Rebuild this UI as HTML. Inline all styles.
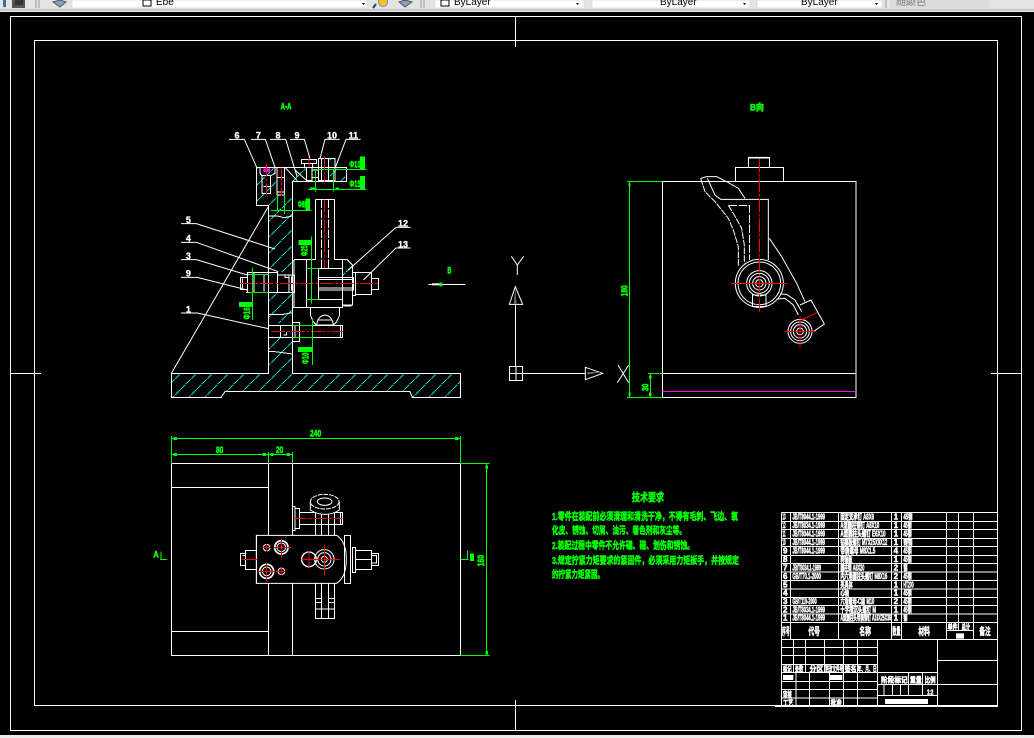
<!DOCTYPE html>
<html lang="zh"><head><meta charset="utf-8"><title>CAD</title>
<style>
html,body{margin:0;padding:0;background:#ececec;width:1034px;height:738px;overflow:hidden}
svg{position:absolute;left:0;top:0;display:block;font-family:"Liberation Sans","Noto Sans CJK SC",sans-serif}
.w{fill:none;stroke:#fff;stroke-width:3;shape-rendering:crispEdges}
.n{fill:none;stroke:#fff;stroke-width:3}
.d{fill:none;stroke:#fff;stroke-width:3;stroke-dasharray:26 4;shape-rendering:crispEdges}
.r{fill:none;stroke:#f00;stroke-width:3;stroke-dasharray:40 6 8 6;shape-rendering:crispEdges}
.rs{fill:none;stroke:#f00;stroke-width:3;shape-rendering:crispEdges}
.g{fill:none;stroke:#0f0;stroke-width:3;shape-rendering:crispEdges}
.gf{fill:#0f0;stroke:none;shape-rendering:crispEdges}
.tg{fill:#0f0;stroke:#0f0;stroke-width:1.6;font-weight:bold;font-size:27px}
.tw{fill:#fff;stroke:#fff;stroke-width:.9;font-weight:bold;font-size:27px}
.tb{fill:#fff;stroke:#fff;stroke-width:1.6;font-weight:bold;font-size:24px}
.h{fill:url(#hatch);stroke:none}
</style></head>
<body>
<svg width="1034" height="738" viewBox="0 0 1034 738" xmlns="http://www.w3.org/2000/svg">
<defs>
<pattern id="hatch" patternUnits="userSpaceOnUse" width="48" height="48">
<path d="M-3 51L51 -3M-24 24L24 -24M24 72L72 24" stroke="#0ff" stroke-width="2.6" fill="none" stroke-dasharray="20 3"/>
</pattern>
</defs>
<rect width="1034" height="738" fill="#ececec"/>
<!-- toolbar -->
<rect x="0" y="0" width="1034" height="9" fill="#e4e4e4"/>
<rect x="0" y="9" width="1034" height="2" fill="#c8c8c8"/>
<rect x="12" y="0" width="13" height="8" fill="#555"/><rect x="15" y="0" width="8" height="5" fill="#333"/>
<rect x="3" y="0" width="3" height="7" fill="#3a6ea5"/>
<path d="M36 0v8M39 0v8M421 0v8M424 0v8M886 0v8" stroke="#999"/>
<path d="M53 2L60 0L66 2L60 7Z" fill="#8aa0c0" stroke="#556"/>
<rect x="81" y="0" width="3" height="6" fill="#778"/>
<circle cx="99" cy="2" r="4.5" fill="#f3c51e" stroke="#6688cc"/>
<rect x="113" y="0" width="7" height="7" fill="#fff" stroke="#668"/>
<rect x="132" y="0" width="5" height="7" fill="#e6d01a" stroke="#886"/>
<rect x="72" y="0" width="295" height="8" fill="#fff" stroke="#ddd"/>
<rect x="143" y="0" width="8" height="6" fill="#fff" stroke="#000"/>
<text x="156" y="5" font-size="10" fill="#000">Ebe</text>
<path d="M362 3h3l-1.500 2z" fill="#000"/>
<circle cx="383" cy="2" r="4.500" fill="#f3c51e" stroke="#68c"/>
<path d="M373 8l3-4" stroke="#246" stroke-width="2"/>
<path d="M399 2L405 0L412 2L405 7Z" fill="#8aa0c0" stroke="#556"/>
<rect x="435" y="0" width="149" height="8" fill="#fff" stroke="#ddd"/>
<rect x="441" y="0" width="8" height="6" fill="#fff" stroke="#000"/>
<text x="454" y="5" font-size="10" fill="#000">ByLayer</text>
<path d="M576 3h3l-1.500 2z" fill="#000"/>
<rect x="592" y="0" width="158" height="8" fill="#fff" stroke="#ddd"/>
<text x="660" y="5" font-size="10" fill="#000">ByLayer</text>
<path d="M743 3h3l-1.500 2z" fill="#000"/>
<rect x="757" y="0" width="125" height="8" fill="#fff" stroke="#ddd"/>
<text x="801" y="5" font-size="10" fill="#000">ByLayer</text>
<path d="M875 3h3l-1.500 2z" fill="#000"/>
<rect x="890" y="0" width="99" height="8" fill="#dcdcdc"/>
<text x="896" y="5" font-size="10" fill="#777">随颜色</text>
<!-- canvas -->
<rect x="0" y="12" width="1034" height="723" fill="#000"/>
<g shape-rendering="crispEdges" fill="none" stroke="#fff">
<rect x="10.500" y="16.500" width="1011" height="714"/>
<rect x="34.500" y="40.500" width="963" height="665"/>
<path d="M515.500 17v30M515.500 700v30M11 373.500h30M991 373.500h30" stroke-width=".8"/>
</g>

<!-- SECTION VIEW -->
<g transform="translate(160,90) scale(.33333)">
<path class="h" d="M34 850H325V850H397V850H902V922H757L750 905H195L183 922H34Z"/>
<path class="h" d="M289 235H351V315H397V235H440V274H397V510H402V547H325V347H289Z"/>
<path class="h" d="M325 607H402V652H397V690L325 707Z"/>
<path class="h" d="M325 743H397V850H325Z"/>
<path class="h" d="M505 205H525V272H505ZM525 235H560V274H525Z"/>
<path class="h" d="M547 508H570L578 525V560H547Z"/>
<path class="n" d="M34 850L325 350"/>
<path class="w" d="M34 850H325V347H289V232H560V274H397V850H902V922H757L750 905H195L183 922H34Z"/>
<path class="w" d="M325 378H352L373 383L397 378M325 673H370L397 668M325 785H345L397 792"/>
<!-- top parts -->
<path class="w" d="M300 232V250L306 256H334L345 250V232M306 256V310H332V256M310 290H332"/>
<path d="M310 235H330V246H310Z" fill="#f0f"/>
<path class="w" d="M351 232V315H373V232M351 262H373M351 306H373"/>
<path class="n" d="M375 232L412 272M405 240L440 272"/>
<path class="w" d="M424 208H470V221H424ZM434 221H458V232H434ZM440 232V272H456V232M475 205H525V272H475ZM485 205V272M505 205V272M456 240H475M456 262H475"/>
<path class="r" d="M320 220V316M365 232V316M493 200V275M447 198V232"/>
<!-- stem -->
<path class="w" d="M466 328H524V508M466 328V508M402 508H468M524 508H560L578 525V645H547"/>
<path class="d" d="M484 328V535M505 328V535"/>
<path class="r" d="M493 328V535"/>
<path class="w" d="M402 510V652H548V535H440M440 510V652M397 652H402"/>
<path class="w" d="M476 535V628H548M476 562H580V600H476M476 568H580M476 594H580M547 508V560"/>
<path class="w" d="M578 547H587V617H578ZM587 548H635V613H587ZM635 565H655V598H635ZM550 648H575"/>
<!-- left nut -->
<path class="w" d="M241 562H262V598H241ZM248 566V594M262 547H352V607H262ZM258 553H325M258 607H325M282 547V607M312 555V605M352 555H387V607H352ZM387 555H403V607H387ZM395 560V602M375 555V563H385"/>
<path class="r" d="M240 580H657"/>
<!-- bottom pin -->
<path class="w" d="M325 707H548V743H325ZM361 707V743M397 697H419V755H397ZM405 707V743M542 707V743M380 728V735H370"/>
<path class="w" d="M451 652V675L460 695L470 705M539 652V675L530 695L520 705"/>
<path class="n" d="M470 705Q473 678 495 675Q517 678 520 705H470M476 690H514"/>
<path class="r" d="M335 724H548"/>
<!-- leaders -->
<path class="n" d="M207 148H253L290 232M273 148H316L345 232M330 148H377L412 262M390 148H433L450 205M539 148H495L480 205M602 148H558L527 230M63 401H109L345 477M63 457H109L355 545M63 509H109L262 555M63 562H112L262 600M63 669H112L325 716M752 412H708L565 540M752 474H708L610 570"/>
<!-- labels -->
<g class="tw" text-anchor="middle">
<text x="231" y="146">6</text><text x="295" y="146">7</text><text x="354" y="146">8</text><text x="411" y="146">9</text><text x="516" y="146">10</text><text x="580" y="146">11</text>
<text x="85" y="399">5</text><text x="85" y="455">4</text><text x="85" y="507">3</text><text x="85" y="560">9</text><text x="85" y="667">1</text>
<text x="729" y="410">12</text><text x="729" y="472">13</text>
</g>
<!-- green dims -->
<path class="g" d="M460 238H620M444 298H620M466 238V305M520 238V305M333 361H455M352 315V361M373 315V372M454 440V640M440 535H475M440 628H475M278 533V690M265 553H325M265 607H325M457 685V825M397 707H457M397 742H457"/>
<path class="gf" d="M600 200H615V238H600ZM600 258H615V298H600ZM237 636H277V651H237ZM414 771H457V786H414ZM415 450H455V465H415ZM436 325H450V361H436ZM450 293H470V300H450ZM527 293H537V300H527Z"/>
<text class="tg" x="568" y="232" textLength="34" lengthAdjust="spacingAndGlyphs">Φ10</text>
<text class="tg" x="568" y="291" textLength="34" lengthAdjust="spacingAndGlyphs">Φ15</text>
<text class="tg" x="414" y="353" textLength="36" lengthAdjust="spacingAndGlyphs">Φ8H7</text>
<text class="tg" transform="translate(443,498) rotate(-90)" textLength="32" lengthAdjust="spacingAndGlyphs">Φ25</text>
<text class="tg" transform="translate(270,688) rotate(-90)" textLength="36" lengthAdjust="spacingAndGlyphs">Φ16</text>
<text class="tg" transform="translate(446,822) rotate(-90)" textLength="34" lengthAdjust="spacingAndGlyphs">Φ10</text>
<text class="tg" x="362" y="58" textLength="32" lengthAdjust="spacingAndGlyphs">A-A</text>
<text class="tg" x="862" y="550" textLength="12" lengthAdjust="spacingAndGlyphs">B</text>
<!-- arrow B -->
<path class="w" d="M805 583H917"/>
<path d="M816 580H838V586H816Z" fill="#fff"/><path class="gf" d="M838 577H848V590H838Z"/>
</g>

<!-- TOP VIEW -->
<g transform="translate(160,425) scale(.33333)">
<path class="w" d="M34 115H901V691H34ZM325 115V331M325 475V691M397 115V331M397 475V691M34 187H325M34 619H325"/>
<path class="g" d="M34 40H901M34 33V115M901 33V115M34 88H397M325 81V115M397 81V115M901 115H989M901 691H989M980 115V691M0 403H21M3 380V403M901 403H925M922 377V403"/>
<path class="gf" d="M41 36H51V45H41ZM885 36H895V45H885ZM41 84H51V93H41ZM308 84H318V93H308ZM331 84H340V93H331ZM380 84H390V93H380ZM930 385H942V408H930ZM976 122H984V132H976ZM976 678H984V688H976Z"/>
<text class="tg" x="-20" y="398" textLength="16" lengthAdjust="spacingAndGlyphs">A</text>
<text class="tg" x="450" y="35" textLength="34" lengthAdjust="spacingAndGlyphs">240</text>
<text class="tg" x="168" y="84" textLength="22" lengthAdjust="spacingAndGlyphs">80</text>
<text class="tg" x="348" y="84" textLength="22" lengthAdjust="spacingAndGlyphs">20</text>
<text class="tg" transform="translate(972,424) rotate(-90)" textLength="34" lengthAdjust="spacingAndGlyphs">160</text>
<!-- plate -->
<path d="M289 331H530Q559 350 559 403Q559 456 530 475H289Z" fill="#000" stroke="none"/>
<path class="n" d="M289 331H530Q559 350 559 403Q559 456 530 475H289Z"/>
<path class="w" d="M289 331V475"/>
<path class="w" d="M554 331H572V475H554ZM577 367H587V443H577ZM587 376H635V434H587ZM587 403H635M635 385H655V421H635ZM635 392H649V414H635ZM241 385H256V421H241ZM248 392H256V414M256 376H289V434H256Z"/>
<path class="rs" d="M246 403H292"/>
<g class="n" stroke-dasharray="none">
<circle cx="320" cy="368" r="10"/><circle cx="364" cy="367" r="20" style="stroke-width:5"/><circle cx="364" cy="367" r="13"/>
<circle cx="320" cy="439" r="21" style="stroke-width:5"/><circle cx="320" cy="439" r="13"/><circle cx="364" cy="439" r="10"/>
<circle cx="447" cy="403" r="22" style="stroke-width:4"/><circle cx="493" cy="403" r="29"/><circle cx="493" cy="403" r="20"/><circle cx="493" cy="403" r="9"/>
</g>
<path class="rs" d="M309 368H331M320 357V380M342 367H393M364 340V398M292 439H345M320 412V470M348 439H376M364 428V450M425 403H470M447 380V426M460 403H540M493 360V450"/>
<!-- tubes -->
<path class="w" d="M466 475V581H524V475M485 475V581M505 475V581M466 520H485M466 532H485M505 520H524M505 532H524M466 552H524"/>
<path class="w" d="M466 262V331M485 262V331M505 262V331M524 262V331"/>
<path class="w" d="M397 244H405V317H397ZM405 250H419V310H405ZM419 262H548V298H419ZM542 262V298"/>
<path class="r" d="M400 280H548"/>
<path d="M451 230A43 23 0 0 1 538 230V255Q520 268 494 268Q470 268 451 255Z" fill="#000"/>
<ellipse cx="494" cy="230" rx="43" ry="22" class="n" stroke-dasharray="14 3"/>
<ellipse cx="494" cy="230" rx="22" ry="11" class="n"/>
<path class="n" d="M451 230V255Q470 268 494 268Q520 268 538 255V230"/>
</g>

<!-- RIGHT VIEW frame + UCS -->
<g transform="translate(500,95) scale(.33333)">
<path class="w" d="M487 259H1068V907H487ZM487 835H1068"/>
<path d="M487 889H1068" stroke="#f0f" stroke-width="3" shape-rendering="crispEdges"/>
<path class="g" d="M388 259V907M381 259H487M381 907H487M451 835V907M444 835H487"/>
<path class="gf" d="M447 842H455V852H447ZM447 893H455V903H447ZM386 266H392V274H386ZM386 893H392V903H386Z"/>
<text class="tg" transform="translate(382,604) rotate(-90)" textLength="33" lengthAdjust="spacingAndGlyphs">180</text>
<text class="tg" transform="translate(445,888) rotate(-90)" textLength="22" lengthAdjust="spacingAndGlyphs">30</text>
<text class="tg" x="750" y="47" textLength="42" lengthAdjust="spacingAndGlyphs">B向</text>
<!-- UCS -->
<path class="n" d="M34 484L52 510L71 484M52 510V540"/>
<path class="n" d="M46 575L28 628H68Z"/>
<path d="M46 580L41 626H50Z" fill="#666"/>
<path class="w" d="M46 628V815M28 814H68V857H28ZM48 814V857M28 835H256"/>
<path class="n" d="M256 817L308 835L256 854Z"/>
<path d="M262 831H306L262 839Z" fill="#666"/>
<path class="n" d="M354 810L386 863M386 810L352 863"/>
</g>

<!-- ARM -->
<g transform="translate(690,150) scale(.33333)">
<path class="w" d="M136 94V52H281V94M175 52V22H239V52"/>
<path d="M175 23H239" stroke="#fff" stroke-width="5"/>
<path class="n" d="M32 85L50 80H80L110 95L145 115L165 145"/>
<path class="n" d="M52 85L75 135L92 148H235V330"/>
<path class="n" d="M32 85L45 125L75 155L115 205L130 240L145 290V350" stroke-dasharray="20 3"/>
<path class="n" d="M115 166L130 190L155 235L163 285V340" stroke-dasharray="20 3"/>
<path class="d" d="M115 166H178V330"/>
<path class="n" d="M238 265L275 320L320 400L345 455"/>
<g class="n">
<circle cx="208" cy="400" r="72"/><circle cx="208" cy="400" r="64"/>
<circle cx="208" cy="400" r="38"/><circle cx="208" cy="400" r="30"/><circle cx="208" cy="400" r="20"/><circle cx="208" cy="400" r="11"/>
<path d="M270 432L290 433L315 450L335 485M260 447L285 445L310 465L325 495"/>
<path d="M330 465L363 450L403 522L370 545"/>
<circle cx="330" cy="544" r="36"/><circle cx="330" cy="544" r="28"/><circle cx="330" cy="544" r="20"/><circle cx="330" cy="544" r="10"/>
</g>
<path d="M188 435H228V470H188Z" fill="#000" class="w"/>
<path class="r" d="M208 26V485"/>
<path class="rs" d="M124 400H290M285 544H380M330 498V592"/>
<path d="M335 510L382 487" stroke="#f00" stroke-width="3" fill="none"/>
</g>

<!-- TECH REQUIREMENTS -->
<g fill="#0f0" stroke="#0f0" stroke-width=".5" font-weight="bold">
<text x="632" y="501" font-size="11" textLength="32" lengthAdjust="spacingAndGlyphs">技术要求</text>
<g font-size="10">
<text x="552" y="520" textLength="186" lengthAdjust="spacingAndGlyphs">1.零件在装配前必须清理和清洗干净，不得有毛刺、飞边、氧</text>
<text x="552" y="534" textLength="134" lengthAdjust="spacingAndGlyphs">化皮、锈蚀、切屑、油污、着色剂和灰尘等。</text>
<text x="552" y="549" textLength="142" lengthAdjust="spacingAndGlyphs">2.装配过程中零件不允许磕、碰、划伤和锈蚀。</text>
<text x="552" y="564" textLength="187" lengthAdjust="spacingAndGlyphs">3.规定拧紧力矩要求的紧固件，必须采用力矩扳手，并按规定</text>
<text x="552" y="578" textLength="52" lengthAdjust="spacingAndGlyphs">的拧紧力矩紧固。</text>
</g>
</g>

<!-- TITLE BLOCK -->
<g transform="translate(775,505) scale(.33333)">
<path class="w" d="M19 22H667V604H0M19 49H667M19 74H667M19 100H667M19 125H667M19 151H667M19 176H667M19 201H667M19 227H667M19 252H667M19 277H667M19 302H667M19 327H667M19 352H667M19 403H667"/>
<path class="w" d="M19 22V604M46 22V403M190 22V403M350 22V403M379 22V403M514 22V403M550 22V377M595 22V403M514 377H595"/>
<path class="w" d="M19 428H308M19 452H308M19 478H308M19 503H308M19 529H308M19 553H308M19 579H308M55 403V503M91 403V503M148 403V503M206 403V604M247 403V604M308 403V604M63 503V604M103 503V604M163 503V604"/>
<path class="w" d="M308 503H487M308 539H487M308 571H487M487 403V604M487 466H667M487 539H667M400 503V571M443 503V571M327 539V571M352 539V571M376 539V571"/>
<rect x="543" y="385" width="24" height="16" fill="#fff"/>
<rect x="24" y="510" width="31" height="15" fill="#fff"/>
<rect x="163" y="510" width="39" height="15" fill="#fff"/>
<rect x="330" y="582" width="129" height="15" fill="#fff"/>
<g class="tb">
<text x="22" y="44" textLength="10" lengthAdjust="spacingAndGlyphs">13</text><text x="52" y="44" textLength="98" lengthAdjust="spacingAndGlyphs">JB/T8044.1-1999</text><text x="196" y="44" textLength="101" lengthAdjust="spacingAndGlyphs">固定支承钉 A8X6</text><text x="356" y="44">1</text><text x="385" y="44" textLength="27" lengthAdjust="spacingAndGlyphs">45钢</text>
<text x="22" y="69" textLength="10" lengthAdjust="spacingAndGlyphs">12</text><text x="52" y="69" textLength="98" lengthAdjust="spacingAndGlyphs">JB/T8034.1-1999</text><text x="196" y="69" textLength="117" lengthAdjust="spacingAndGlyphs">A型圆柱销钉 A8X10</text><text x="356" y="69">1</text><text x="385" y="69" textLength="25" lengthAdjust="spacingAndGlyphs">45钢</text>
<text x="22" y="95" textLength="10" lengthAdjust="spacingAndGlyphs">11</text><text x="52" y="95" textLength="98" lengthAdjust="spacingAndGlyphs">JB/T8044.1-1999</text><text x="196" y="95" textLength="136" lengthAdjust="spacingAndGlyphs">A型圆柱头螺钉 E6X10</text><text x="356" y="95">1</text><text x="385" y="95" textLength="25" lengthAdjust="spacingAndGlyphs">45钢</text>
<text x="22" y="120" textLength="10" lengthAdjust="spacingAndGlyphs">10</text><text x="52" y="120" textLength="98" lengthAdjust="spacingAndGlyphs">JB/T8044.1-1999</text><text x="196" y="120" textLength="141" lengthAdjust="spacingAndGlyphs">钻模板螺钉 M7X25X9X12</text><text x="356" y="120">1</text><text x="385" y="120" textLength="27" lengthAdjust="spacingAndGlyphs">铸钢</text>
<text x="24" y="146">9</text><text x="52" y="146" textLength="98" lengthAdjust="spacingAndGlyphs">JB/T8044.1-1999</text><text x="196" y="146" textLength="105" lengthAdjust="spacingAndGlyphs">带肩螺母 M8X1.5</text><text x="356" y="146">4</text><text x="385" y="146" textLength="25" lengthAdjust="spacingAndGlyphs">45钢</text>
<text x="24" y="171">8</text><text x="196" y="171" textLength="36" lengthAdjust="spacingAndGlyphs">转轴板</text><text x="356" y="171">1</text><text x="385" y="171" textLength="25" lengthAdjust="spacingAndGlyphs">45钢</text>
<text x="24" y="197">7</text><text x="52" y="197" textLength="86" lengthAdjust="spacingAndGlyphs">JB/T8034.1-1999</text><text x="196" y="197" textLength="72" lengthAdjust="spacingAndGlyphs">圆柱销 A8X20</text><text x="356" y="197">2</text><text x="385" y="197" textLength="12" lengthAdjust="spacingAndGlyphs">钢</text>
<text x="24" y="222">6</text><text x="52" y="222" textLength="86" lengthAdjust="spacingAndGlyphs">GB/T70.1-2000</text><text x="196" y="222" textLength="141" lengthAdjust="spacingAndGlyphs">内六角圆柱头螺钉 M8X16</text><text x="356" y="222">2</text><text x="385" y="222" textLength="25" lengthAdjust="spacingAndGlyphs">45钢</text>
<text x="24" y="247">5</text><text x="196" y="247" textLength="37" lengthAdjust="spacingAndGlyphs">夹具体</text><text x="356" y="247">1</text><text x="385" y="247" textLength="31" lengthAdjust="spacingAndGlyphs">HT200</text>
<text x="24" y="272">4</text><text x="196" y="272" textLength="26" lengthAdjust="spacingAndGlyphs">心轴</text><text x="356" y="272">1</text><text x="385" y="272" textLength="25" lengthAdjust="spacingAndGlyphs">45钢</text>
<text x="24" y="297">3</text><text x="52" y="297" textLength="73" lengthAdjust="spacingAndGlyphs">GB/T119-2000</text><text x="196" y="297" textLength="102" lengthAdjust="spacingAndGlyphs">六角螺母-C级 M10</text><text x="356" y="297">2</text><text x="385" y="297" textLength="25" lengthAdjust="spacingAndGlyphs">45钢</text>
<text x="24" y="322">2</text><text x="52" y="322" textLength="98" lengthAdjust="spacingAndGlyphs">JB/T8034.1-1999</text><text x="196" y="322" textLength="107" lengthAdjust="spacingAndGlyphs">十字槽沉头螺钉 M</text><text x="356" y="322">1</text><text x="385" y="322" textLength="25" lengthAdjust="spacingAndGlyphs">45钢</text>
<text x="24" y="347">1</text><text x="52" y="347" textLength="98" lengthAdjust="spacingAndGlyphs">JB/T8044.1-1999</text><text x="196" y="347" textLength="152" lengthAdjust="spacingAndGlyphs">A型圆柱头带肩销钉 A16X25X36</text><text x="356" y="347">1</text><text x="385" y="347" textLength="12" lengthAdjust="spacingAndGlyphs">钢</text>
</g>
<g class="tb" style="font-size:30px">
<text x="21" y="390" textLength="23" lengthAdjust="spacingAndGlyphs">序号</text><text x="100" y="390" textLength="35" lengthAdjust="spacingAndGlyphs">代号</text><text x="253" y="390" textLength="35" lengthAdjust="spacingAndGlyphs">名称</text><text x="352" y="390" textLength="24" lengthAdjust="spacingAndGlyphs">数量</text><text x="430" y="390" textLength="35" lengthAdjust="spacingAndGlyphs">材料</text><text x="613" y="390" textLength="34" lengthAdjust="spacingAndGlyphs">备注</text>
</g>
<g class="tb" style="font-size:22px">
<text x="518" y="373" textLength="30" lengthAdjust="spacingAndGlyphs">单件</text><text x="560" y="373" textLength="25" lengthAdjust="spacingAndGlyphs">总计</text>
<text x="24" y="499" textLength="26" lengthAdjust="spacingAndGlyphs">标记</text><text x="60" y="499" textLength="25" lengthAdjust="spacingAndGlyphs">处数</text><text x="103" y="499" textLength="42" lengthAdjust="spacingAndGlyphs">分区</text><text x="150" y="499" textLength="55" lengthAdjust="spacingAndGlyphs">更改文件号</text><text x="209" y="499" textLength="36" lengthAdjust="spacingAndGlyphs">签名</text><text x="248" y="499" textLength="57" lengthAdjust="spacingAndGlyphs">年、月、日</text>
<text x="24" y="576" textLength="26" lengthAdjust="spacingAndGlyphs">审核</text><text x="24" y="601" textLength="31" lengthAdjust="spacingAndGlyphs">工艺</text><text x="167" y="601" textLength="33" lengthAdjust="spacingAndGlyphs">批准</text>
<text x="318" y="533" textLength="80" lengthAdjust="spacingAndGlyphs">阶段标记</text><text x="405" y="533" textLength="35" lengthAdjust="spacingAndGlyphs">重量</text><text x="449" y="533" textLength="33" lengthAdjust="spacingAndGlyphs">比例</text><text x="456" y="568" textLength="19" lengthAdjust="spacingAndGlyphs">1:2</text>
</g>
</g>
</svg>
</body></html>
